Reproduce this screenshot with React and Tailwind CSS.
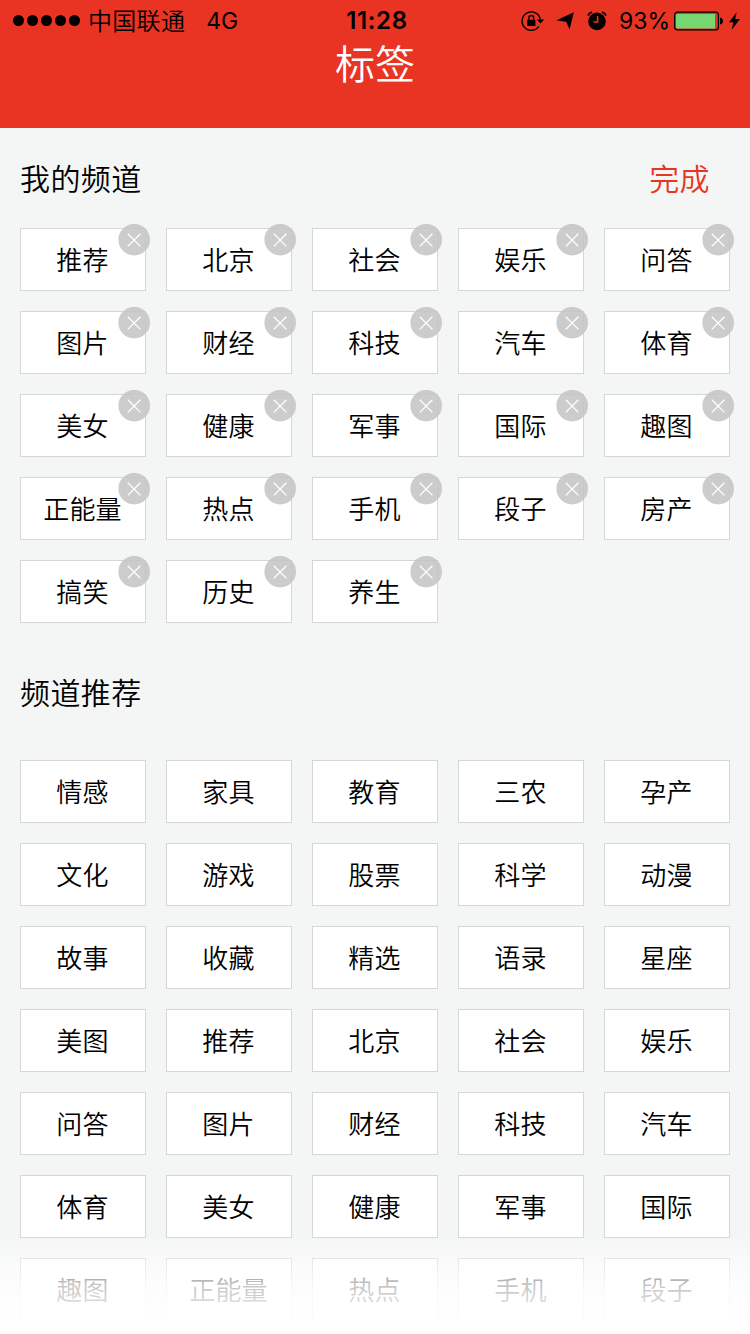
const mine = [
  '推荐', '北京', '社会', '娱乐', '问答',
  '图片', '财经', '科技', '汽车', '体育',
  '美女', '健康', '军事', '国际', '趣图',
  '正能量', '热点', '手机', '段子', '房产',
  '搞笑', '历史', '养生',
];

const suggested = [
  '情感', '家具', '教育', '三农', '孕产',
  '文化', '游戏', '股票', '科学', '动漫',
  '故事', '收藏', '精选', '语录', '星座',
  '美图', '推荐', '北京', '社会', '娱乐',
  '问答', '图片', '财经', '科技', '汽车',
  '体育', '美女', '健康', '军事', '国际',
  '趣图', '正能量', '热点', '手机', '段子',
];

function StatusBar() {
  return (
    <div className="grid h-10 grid-cols-[1fr_auto_1fr] items-center pr-[10px] pl-[13px] text-black">
      <div className="flex items-center">
        <div className="flex gap-[3px]">
          {[0, 1, 2, 3, 4].map((i) => (
            <span key={i} className="size-[11px] rounded-full bg-black" />
          ))}
        </div>
        <span className="ml-[8px] pb-[2px] text-[24px] leading-[38px] font-[350] tracking-[0.3px]">中国联通</span>
        <span className="ml-[21px] pt-px font-['Inter',sans-serif] text-[23px] leading-10 font-normal">4G</span>
      </div>
      <span className="pt-px pl-px font-['Inter',sans-serif] text-[24px] leading-10 font-semibold tracking-[0.6px]">11:28</span>
      <div className="flex items-center justify-end">
        <svg className="h-6 w-6" viewBox="0 0 24 24" fill="none">
          <path d="M18.8 17.4A9.2 9.2 0 1 1 20.3 10.5" stroke="black" strokeWidth="1.4" />
          <path d="M16.8 10.6H24.2L20.5 14.6Z" fill="black" />
          <rect x="7.2" y="10.8" width="8.2" height="6.2" rx="0.6" fill="black" />
          <path d="M8.9 11V8.9a2.4 2.4 0 0 1 4.8 0V11" stroke="black" strokeWidth="1.4" />
        </svg>
        <svg className="ml-[12px] h-[18px] w-[18px]" viewBox="0 0 18 18">
          <path d="M17.8 0.2L13.6 17.4L10.2 9.8L0.2 8.4Z" fill="black" />
        </svg>
        <svg className="ml-[13px] h-5 w-5" viewBox="0 0 20 20" fill="none">
          <circle cx="10" cy="10.4" r="8.8" fill="black" />
          <path d="M0.9 4.6Q2.2 1.7 5.1 1.1M19.1 4.6Q17.8 1.7 14.9 1.1" stroke="black" strokeWidth="1.6" />
          <path d="M10.6 5V11H6.4" stroke="#e93323" strokeWidth="1.6" />
        </svg>
        <span className="ml-[12px] w-[50px] pt-px font-['Inter',sans-serif] text-[23px] leading-10 font-normal">93%</span>
        <svg className="ml-[5px] h-5 w-[49px]" viewBox="0 0 49 20" fill="none">
          <rect x="0.6" y="1.1" width="43.8" height="17.8" rx="3" stroke="black" strokeWidth="1.2" />
          <path d="M3.5 3H41V17.5H3.5Q2 17.5 2 16V4.5Q2 3 3.5 3Z" fill="#76d672" />
          <path d="M46 6.5Q49 7.5 49 10Q49 12.5 46 13.5Z" fill="black" />
        </svg>
        <svg className="ml-[6px] h-5 w-[11px]" viewBox="0 0 12 20">
          <path d="M8.3 0.5L0 11.3H4.7L3 19.5L12 7.8H6.8Z" fill="black" />
        </svg>
      </div>
    </div>
  );
}

function Tag({ label, removable }) {
  return (
    <div className="relative flex h-[63px] items-center justify-center border border-[#d5d7d6] bg-white pr-px pb-px text-[26px] leading-none tracking-[0.2px] text-black">
      <span>{label}</span>
      {removable && (
        <button aria-label="删除" className="absolute -top-[5px] -right-[5px] size-8 rounded-full">
          <svg className="block size-8" viewBox="0 0 32 32" fill="none">
            <circle cx="16.2" cy="15.7" r="15.8" fill="#c4c4c4" fillOpacity="0.87" />
            <path d="M9.8 9.8L22.4 22.4M22.4 9.8L9.8 22.4" stroke="white" strokeWidth="1.3" />
          </svg>
        </button>
      )}
    </div>
  );
}

function TagGrid({ items, removable = false }) {
  return (
    <div className="grid grid-cols-5 gap-5">
      {items.map((label) => (
        <Tag key={label} label={label} removable={removable} />
      ))}
    </div>
  );
}

export default function App() {
  return (
    <div className="relative h-[1334px] w-[750px] overflow-hidden bg-[#f4f6f5] font-['Noto_Sans_CJK_SC',sans-serif] font-[350] text-black">
      <header className="h-32 bg-[#e93323]">
        <StatusBar />
        <h1 className="text-center text-[40px] leading-[44px] font-[350] text-white">标签</h1>
      </header>
      <main className="px-5">
        <section>
          <div className="flex h-[100px] items-center justify-between pr-5 pb-[3px] text-[30px] leading-none tracking-[0.4px]">
            <h2>我的频道</h2>
            <button className="text-[#e93323]">完成</button>
          </div>
          <TagGrid items={mine} removable />
        </section>
        <section>
          <h2 className="flex h-[137px] items-center pb-[2px] text-[30px] leading-none tracking-[0.4px]">频道推荐</h2>
          <TagGrid items={suggested} />
        </section>
      </main>
      <div className="pointer-events-none absolute inset-x-0 bottom-0 h-[100px] bg-linear-to-b from-white/0 via-white/77 to-white" />
    </div>
  );
}
